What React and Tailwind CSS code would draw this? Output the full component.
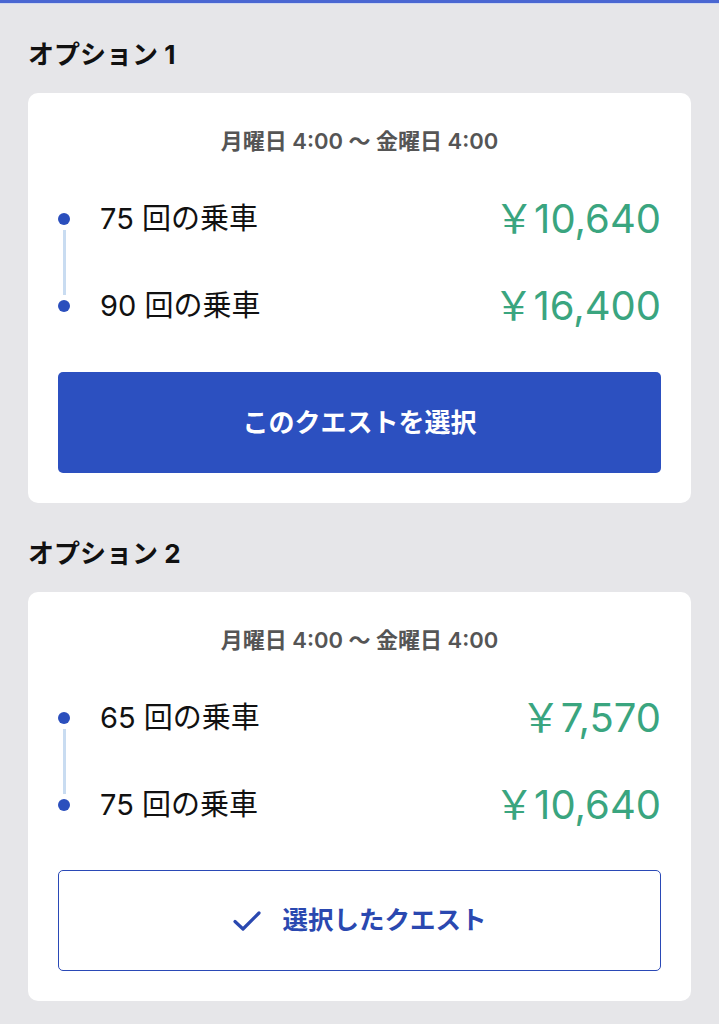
import React from "react";

const options = [
  {
    title: "オプション 1",
    period: "月曜日 4:00 〜 金曜日 4:00",
    tiers: [
      { rides: "75 回の乗車", price: "￥10,640" },
      { rides: "90 回の乗車", price: "￥16,400" },
    ],
    selected: false,
  },
  {
    title: "オプション 2",
    period: "月曜日 4:00 〜 金曜日 4:00",
    tiers: [
      { rides: "65 回の乗車", price: "￥7,570" },
      { rides: "75 回の乗車", price: "￥10,640" },
    ],
    selected: true,
  },
];

function CheckIcon() {
  return (
    <svg width="30" height="24" viewBox="0 0 30 24" fill="none">
      <path
        d="M3 12.5 L11 20 L27 4"
        stroke="currentColor"
        strokeWidth="3.2"
        strokeLinecap="round"
        strokeLinejoin="round"
      />
    </svg>
  );
}

function OptionCard({ option }) {
  return (
    <section>
      <h2 className="text-[26px] leading-[32px] font-bold text-[#111] mb-[22px] px-[28px]">
        {option.title}
      </h2>
      <div className="mx-[28px] bg-white rounded-[10px] pt-[34px] pb-[30px] px-[30px]">
        <p className="text-center text-[22px] leading-[28px] font-semibold text-[#555]">
          {option.period}
        </p>

        <div className="flex mt-[34px]">
          <div className="flex flex-col items-center w-[12px] py-[24px]">
            <span className="w-[12px] h-[12px] rounded-full bg-[#2b4fbd]"></span>
            <span className="flex-1 w-[3px] bg-[#c9dcf1] my-[5px]"></span>
            <span className="w-[12px] h-[12px] rounded-full bg-[#2b4fbd]"></span>
          </div>
          <div className="flex-1 flex flex-col gap-[27px] pl-[30px]">
            {option.tiers.map((tier, i) => (
              <div key={i} className="h-[60px] flex items-center justify-between">
                <span className="text-[29px] text-[#111]">{tier.rides}</span>
                <span className="text-[40px] text-[#3aa57f]">{tier.price}</span>
              </div>
            ))}
          </div>
        </div>

        {option.selected ? (
          <button className="mt-[35px] w-full h-[101px] rounded-[5px] border-[1.5px] border-[#2a49b6] bg-white text-[#2a48b0] text-[25.5px] font-bold flex items-center justify-center gap-[20px]">
            <CheckIcon />
            選択したクエスト
          </button>
        ) : (
          <button className="mt-[36px] w-full h-[101px] rounded-[5px] bg-[#2c50c0] text-white text-[26px] font-bold flex items-center justify-center">
            このクエストを選択
          </button>
        )}
      </div>
    </section>
  );
}

export default function App() {
  return (
    <div
      className="min-h-screen bg-[#e6e6e9]"
      style={{ fontFamily: 'Inter, "Noto Sans CJK JP", sans-serif' }}
    >
      <div className="h-[3px] bg-[#4a67d2]"></div>
      <div className="h-[1px] bg-[#cfd8f0]"></div>
      <div className="pt-[35px]">
        <OptionCard option={options[0]} />
        <div className="h-[35px]"></div>
        <OptionCard option={options[1]} />
      </div>
    </div>
  );
}
